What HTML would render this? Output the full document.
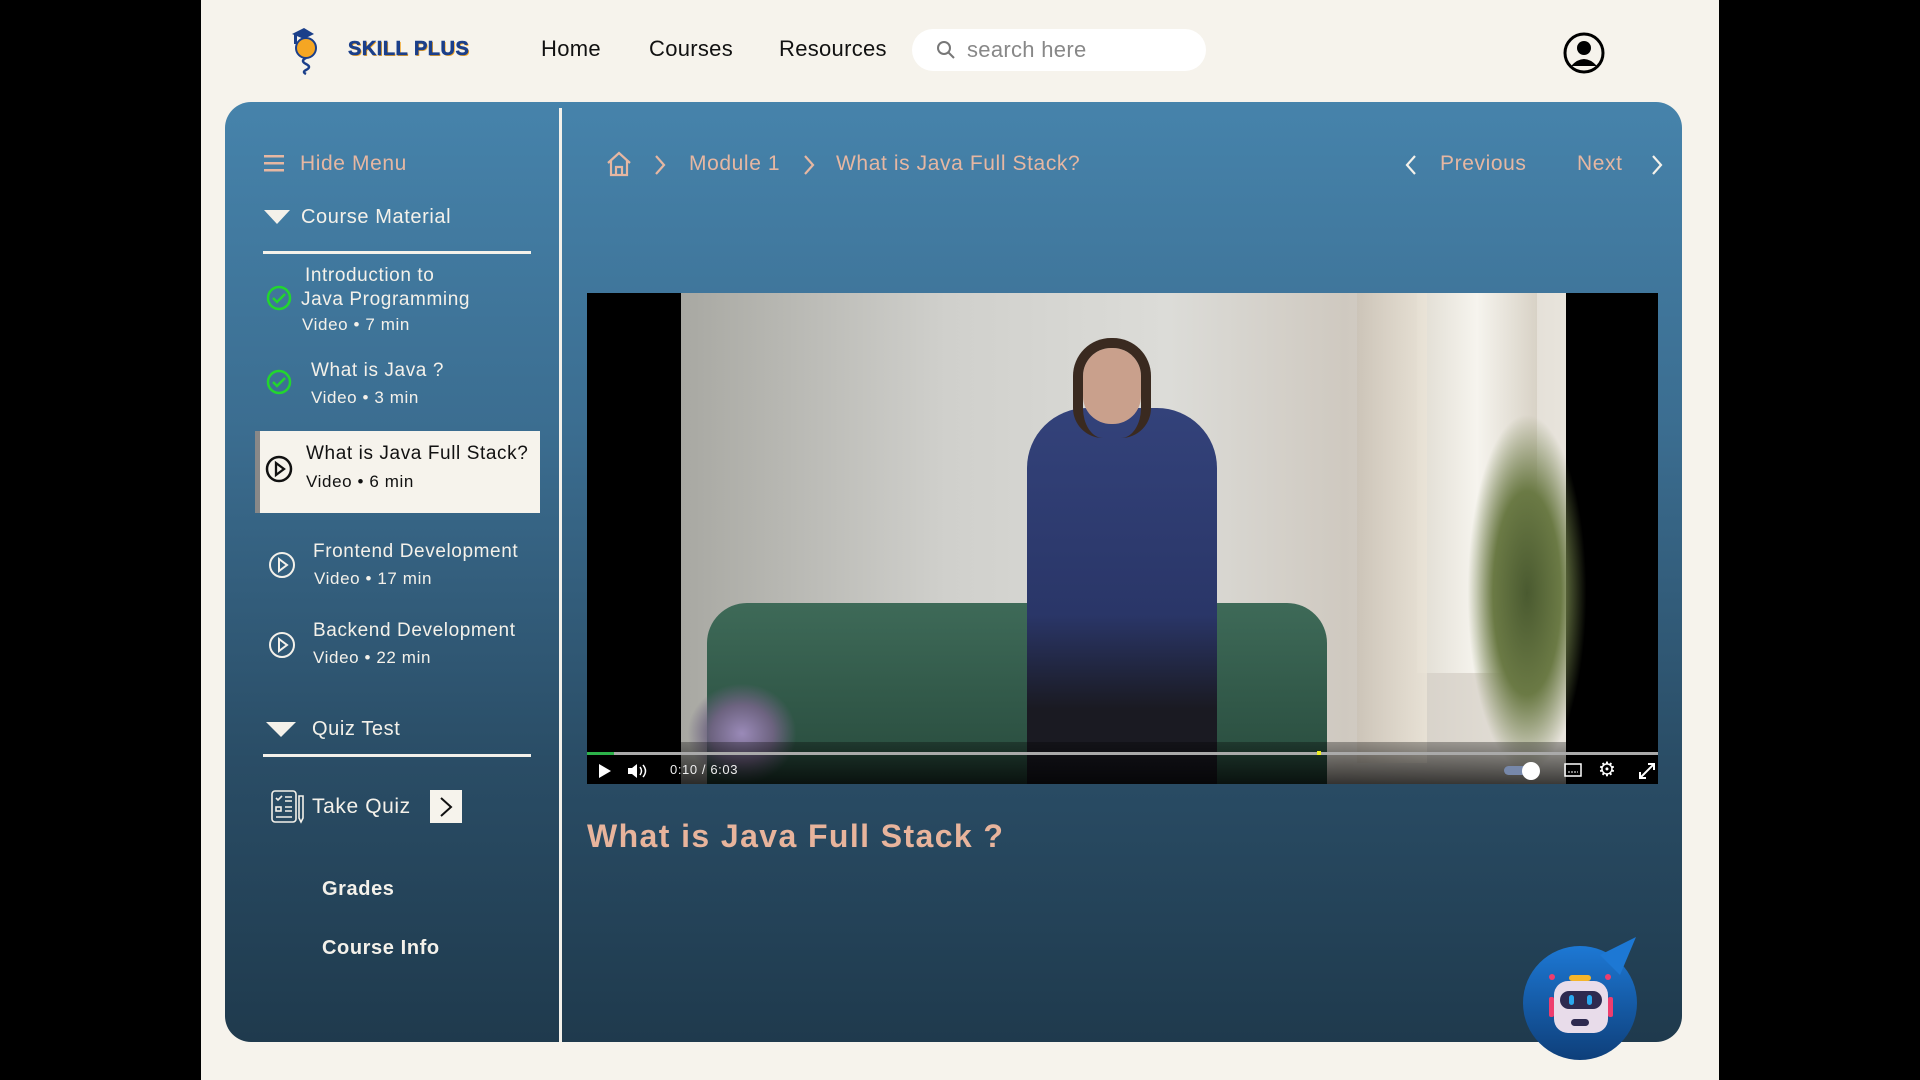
<!DOCTYPE html>
<html><head><meta charset="utf-8"><style>
*{margin:0;padding:0;box-sizing:border-box}
body{width:1920px;height:1080px;background:#000;font-family:"Liberation Sans",sans-serif;position:relative;overflow:hidden}
.page{position:absolute;left:201px;top:0;width:1518px;height:1080px;background:#f6f3ec}
.abs{position:absolute}
.nav{font-size:22px;color:#111;top:36px;letter-spacing:0.3px}
.panel{position:absolute;left:225px;top:102px;width:1457px;height:940px;border-radius:26px;background:linear-gradient(180deg,#4683ab 0%,#3b6d90 35%,#2a4d66 70%,#1f3a4d 100%);overflow:hidden}
.panel div{letter-spacing:0.6px}
.peach{color:#e6b7a2}
.w{color:#f4f1ea}
.t{font-size:19px;line-height:24px}
.s{font-size:17px}
</style></head><body>
<div class="page"></div>
<!-- logo -->
<svg class="abs" style="left:288px;top:26px" width="36" height="50" viewBox="0 0 36 50">
<path d="M4 8 L16 2 L26 8 L16 13 Z" fill="#1b3f8a"/><rect x="6" y="8" width="3" height="10" fill="#1b3f8a"/>
<circle cx="18" cy="22" r="10" fill="#f5a623" stroke="#1b3f8a" stroke-width="2"/>
<path d="M18 32 q-6 3 0 6 q6 3 0 6 q-4 2 0 4" stroke="#1b3f8a" stroke-width="2.5" fill="none"/></svg>
<div class="abs" style="left:348px;top:38px;font-size:20px;font-weight:900;color:#1b3f8a;letter-spacing:0.5px;text-shadow:1px 1px 0 #f5a623;-webkit-text-stroke:0.6px #1b3f8a">SKILL PLUS</div>
<div class="abs nav" style="left:541px">Home</div>
<div class="abs nav" style="left:649px">Courses</div>
<div class="abs nav" style="left:779px">Resources</div>
<div class="abs" style="left:912px;top:29px;width:294px;height:42px;border-radius:21px;background:#fff"></div>
<svg class="abs" style="left:935px;top:39px" width="22" height="22" viewBox="0 0 22 22"><circle cx="9" cy="9" r="6" stroke="#777" stroke-width="2" fill="none"/><path d="M13.5 13.5 L19 19" stroke="#777" stroke-width="2"/></svg>
<div class="abs" style="left:967px;top:37px;font-size:22px;color:#888;letter-spacing:0.3px">search here</div>
<svg class="abs" style="left:1563px;top:32px" width="42" height="42" viewBox="0 0 42 42"><circle cx="21" cy="21" r="19" stroke="#000" stroke-width="3" fill="none"/><circle cx="21" cy="16" r="7" fill="#000"/><path d="M8 34 Q21 20 34 34" fill="#000"/></svg>

<div class="panel">
<div class="abs" style="left:334px;top:6px;width:3px;height:940px;background:#f4f1ea"></div>
<!-- sidebar -->
<svg class="abs" style="left:39px;top:52px" width="20" height="18"><rect y="1" width="20" height="2.5" fill="#e6b7a2"/><rect y="8" width="20" height="2.5" fill="#e6b7a2"/><rect y="15" width="20" height="2.5" fill="#e6b7a2"/></svg>
<div class="abs peach" style="left:75px;top:50px;font-size:21px">Hide Menu</div>
<svg class="abs" style="left:39px;top:108px" width="26" height="16"><path d="M0 0 L26 0 L13 14Z" fill="#f4f1ea"/></svg>
<div class="abs w" style="left:76px;top:104px;font-size:20px">Course Material</div>
<div class="abs" style="left:38px;top:149px;width:268px;height:3px;background:#f4f1ea"></div>

<svg class="abs" style="left:41px;top:183px" width="26" height="26"><circle cx="13" cy="13" r="11" stroke="#22d62e" stroke-width="2.5" fill="none"/><path d="M7 13 l4 4 l8 -8" stroke="#22d62e" stroke-width="2.5" fill="none"/></svg>
<div class="abs w t" style="left:80px;top:162px">Introduction to</div>
<div class="abs w t" style="left:76px;top:186px">Java Programming</div>
<div class="abs w s" style="left:77px;top:213px">Video • 7 min</div>

<svg class="abs" style="left:41px;top:267px" width="26" height="26"><circle cx="13" cy="13" r="11" stroke="#22d62e" stroke-width="2.5" fill="none"/><path d="M7 13 l4 4 l8 -8" stroke="#22d62e" stroke-width="2.5" fill="none"/></svg>
<div class="abs w t" style="left:86px;top:257px">What is Java ?</div>
<div class="abs w s" style="left:86px;top:286px">Video • 3 min</div>

<div class="abs" style="left:30px;top:329px;width:285px;height:82px;background:#f6f3ec;border-left:5px solid #888"></div>
<svg class="abs" style="left:40px;top:353px" width="28" height="28"><circle cx="14" cy="14" r="12" stroke="#111" stroke-width="2.5" fill="none"/><path d="M11 8 L19 14 L11 20Z" stroke="#111" stroke-width="2.3" fill="none"/></svg>
<div class="abs t" style="left:81px;top:340px;color:#111">What is Java Full Stack?</div>
<div class="abs s" style="left:81px;top:370px;color:#111">Video • 6 min</div>

<svg class="abs" style="left:43px;top:449px" width="28" height="28"><circle cx="14" cy="14" r="12" stroke="#f4f1ea" stroke-width="2" fill="none"/><path d="M11 8 L19 14 L11 20Z" stroke="#f4f1ea" stroke-width="2" fill="none"/></svg>
<div class="abs w t" style="left:88px;top:438px">Frontend Development</div>
<div class="abs w s" style="left:89px;top:467px">Video • 17 min</div>

<svg class="abs" style="left:43px;top:529px" width="28" height="28"><circle cx="14" cy="14" r="12" stroke="#f4f1ea" stroke-width="2" fill="none"/><path d="M11 8 L19 14 L11 20Z" stroke="#f4f1ea" stroke-width="2" fill="none"/></svg>
<div class="abs w t" style="left:88px;top:517px">Backend Development</div>
<div class="abs w s" style="left:88px;top:546px">Video • 22 min</div>

<svg class="abs" style="left:41px;top:620px" width="30" height="16"><path d="M0 0 L30 0 L15 15Z" fill="#f4f1ea"/></svg>
<div class="abs w" style="left:87px;top:616px;font-size:20px">Quiz Test</div>
<div class="abs" style="left:38px;top:652px;width:268px;height:3px;background:#f4f1ea"></div>

<svg class="abs" style="left:46px;top:688px" width="34" height="34" viewBox="0 0 34 34" fill="none" stroke="#f4f1ea" stroke-width="1.6"><rect x="1" y="1" width="24" height="31" rx="3"/><path d="M5 8 l2 2 l4-4 M14 7 h7 M14 11 h7"/><rect x="5" y="17" width="5" height="4"/><path d="M14 17 h7 M14 21 h7 M5 27 h16"/><path d="M28 6 v22 l2 4 l2-4 v-22 z"/></svg>
<div class="abs w" style="left:87px;top:693px;font-size:21px">Take Quiz</div>
<div class="abs" style="left:205px;top:688px;width:32px;height:33px;background:#f6f3ec"></div>
<svg class="abs" style="left:213px;top:694px" width="16" height="22"><path d="M3 2 L13 11 L3 20" stroke="#111" stroke-width="2" fill="none"/></svg>
<div class="abs w" style="left:97px;top:776px;font-size:20px;font-weight:bold">Grades</div>
<div class="abs w" style="left:97px;top:835px;font-size:20px;font-weight:bold">Course Info</div>

<!-- breadcrumb -->
<svg class="abs" style="left:381px;top:49px" width="26" height="26" viewBox="0 0 26 26" fill="none" stroke="#e6b7a2" stroke-width="2.2"><path d="M2 12 L13 2 L24 12 M5 10 V24 H21 V10 M10 24 V16 H16 V24"/></svg>
<svg class="abs" style="left:428px;top:52px" width="14" height="22"><path d="M3 2 L11 11 L3 20" stroke="#e6b7a2" stroke-width="2.2" fill="none"/></svg>
<div class="abs peach" style="left:464px;top:50px;font-size:21px">Module 1</div>
<svg class="abs" style="left:577px;top:52px" width="14" height="22"><path d="M3 2 L11 11 L3 20" stroke="#e6b7a2" stroke-width="2.2" fill="none"/></svg>
<div class="abs peach" style="left:611px;top:50px;font-size:21px">What is Java Full Stack?</div>
<svg class="abs" style="left:1179px;top:52px" width="14" height="22"><path d="M11 2 L3 11 L11 20" stroke="#f4f1ea" stroke-width="2.2" fill="none"/></svg>
<div class="abs peach" style="left:1215px;top:50px;font-size:21px">Previous</div>
<div class="abs peach" style="left:1352px;top:50px;font-size:21px">Next</div>
<svg class="abs" style="left:1425px;top:52px" width="14" height="22"><path d="M3 2 L11 11 L3 20" stroke="#f4f1ea" stroke-width="2.2" fill="none"/></svg>

<!-- video -->
<div class="abs" style="left:362px;top:191px;width:1071px;height:491px;background:#000;overflow:hidden">
 <div class="abs" style="left:94px;top:0;width:885px;height:491px;background:linear-gradient(90deg,#a8a8a2 0%,#d0d0cc 30%,#dcdcd8 55%,#cfc9c0 75%,#e8e4dc 100%)"></div>
 <div class="abs" style="left:830px;top:0;width:120px;height:380px;background:linear-gradient(90deg,#e0dcd2,#f6f4ee,#d8d2c6)"></div>
 <div class="abs" style="left:770px;top:0;width:70px;height:470px;background:linear-gradient(90deg,rgba(200,190,175,.5),rgba(235,228,215,.8))"></div>
 <div class="abs" style="left:880px;top:120px;width:120px;height:360px;background:radial-gradient(ellipse,#4a5a30 0%,#6b7a45 40%,rgba(100,110,60,0) 70%)"></div>
 <div class="abs" style="left:120px;top:310px;width:620px;height:181px;border-radius:40px 40px 0 0;background:linear-gradient(180deg,#3e6a58,#274a3c)"></div>
 <div class="abs" style="left:100px;top:390px;width:110px;height:101px;background:radial-gradient(ellipse,#9a8ab8 0%,#6d6380 40%,rgba(0,0,0,0) 70%)"></div>
 <div class="abs" style="left:440px;top:115px;width:190px;height:376px;border-radius:60px 60px 0 0;background:linear-gradient(180deg,#33427a,#2a3668 55%,#1a1a22 80%)"></div>
 <div class="abs" style="left:496px;top:55px;width:58px;height:76px;border-radius:28px;background:#c9a08c"></div>
 <div class="abs" style="left:486px;top:45px;width:78px;height:100px;border-radius:38px 38px 30px 30px;border:10px solid #3a2a20;border-bottom:none;"></div>
 <div class="abs" style="left:0;top:449px;width:1071px;height:42px;background:linear-gradient(180deg,rgba(0,0,0,.3),rgba(0,0,0,.75))"></div>
 <div class="abs" style="left:0;top:459px;width:1071px;height:3px;background:#aaa"></div>
 <div class="abs" style="left:0;top:459px;width:27px;height:3px;background:#2db34a"></div>
 <div class="abs" style="left:730px;top:458px;width:4px;height:4px;background:#ee2"></div>
 <svg class="abs" style="left:11px;top:470px" width="14" height="16"><path d="M1 1 L13 8 L1 15Z" fill="#fff"/></svg>
 <svg class="abs" style="left:40px;top:470px" width="22" height="16"><path d="M1 5 H5 L10 1 V15 L5 11 H1Z" fill="#fff"/><path d="M13 4 q3 4 0 8 M16 2 q5 6 0 12" stroke="#fff" stroke-width="1.5" fill="none"/></svg>
 <div class="abs" style="left:83px;top:469px;font-size:13px;color:#eee">0:10 / 6:03</div>
 <div class="abs" style="left:917px;top:473px;width:30px;height:9px;border-radius:5px;background:#7788aa"></div>
 <div class="abs" style="left:935px;top:469px;width:18px;height:18px;border-radius:50%;background:#fff"></div>
 <svg class="abs" style="left:977px;top:470px" width="18" height="16"><rect x="1" y="1" width="16" height="12" stroke="#fff" stroke-width="1.5" fill="none"/><path d="M4 9 h10" stroke="#fff" stroke-dasharray="2 1"/></svg>
 <div class="abs" style="left:1011px;top:464px;font-size:20px;color:#fff">⚙</div>
 <svg class="abs" style="left:1051px;top:469px" width="18" height="18"><path d="M2 16 L16 2 M10 2 H16 V8 M2 10 V16 H8" stroke="#fff" stroke-width="2" fill="none"/></svg>
</div>
<div class="abs" style="left:362px;top:716px;font-size:32px;font-weight:bold;color:#e8b49c;letter-spacing:1.4px">What is Java Full Stack ?</div>
</div>

<!-- robot -->
<svg class="abs" style="left:1520px;top:935px" width="120" height="126" viewBox="0 0 120 126">
<defs><linearGradient id="g" x1="0" y1="0" x2="0" y2="1"><stop offset="0" stop-color="#1d78d4"/><stop offset="1" stop-color="#0e3f7a"/></linearGradient></defs>
<circle cx="60" cy="68" r="57" fill="url(#g)"/><path d="M80 20 L116 2 L100 40Z" fill="#1d78d4"/>
<rect x="34" y="46" width="54" height="52" rx="14" fill="#e8dcea"/><rect x="40" y="56" width="42" height="18" rx="9" fill="#2e2a50"/>
<rect x="49" y="60" width="5" height="10" rx="2.5" fill="#2aa8ee"/><rect x="67" y="60" width="5" height="10" rx="2.5" fill="#2aa8ee"/>
<rect x="51" y="84" width="18" height="7" rx="3.5" fill="#2e2a50"/><rect x="49" y="40" width="22" height="6" rx="3" fill="#f5b52a"/>
<rect x="29" y="62" width="5" height="20" rx="2" fill="#ee3d6e"/><rect x="88" y="62" width="5" height="20" rx="2" fill="#ee3d6e"/>
<circle cx="32" cy="42" r="3" fill="#ee3d6e"/><circle cx="88" cy="42" r="3" fill="#ee3d6e"/></svg>
</body></html>
